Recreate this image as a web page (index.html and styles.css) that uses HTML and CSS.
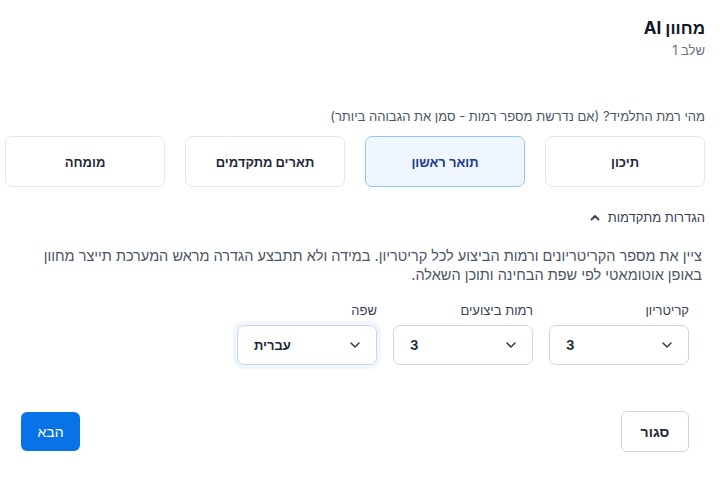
FILE: index.html
```html
<!DOCTYPE html>
<html lang="he" dir="rtl">
<head>
<meta charset="utf-8">
<link rel="stylesheet" href="styles.css">
</head>
<body>
<div class="dialog">
  <header class="head">
    <h1 class="title">מחוון AI</h1>
    <div class="step">שלב 1</div>
  </header>

  <section class="level">
    <p class="question">מהי רמת התלמיד? (אם נדרשת מספר רמות - סמן את הגבוהה ביותר)</p>
    <div class="cards">
      <button class="card">תיכון</button>
      <button class="card selected">תואר ראשון</button>
      <button class="card">תארים מתקדמים</button>
      <button class="card">מומחה</button>
    </div>
  </section>

  <section class="advanced">
    <div class="toggle">
      <span>הגדרות מתקדמות</span>
      <svg class="chev-up" width="10" height="7" viewBox="0 0 10 7"><path d="M1.5 5.5 L5 2 L8.5 5.5" fill="none" stroke="#374151" stroke-width="1.8" stroke-linecap="round" stroke-linejoin="round"/></svg>
    </div>
    <p class="desc">ציין את מספר הקריטריונים ורמות הביצוע לכל קריטריון. במידה ולא תתבצע הגדרה מראש המערכת תייצר מחוון באופן אוטומאטי לפי שפת הבחינה ותוכן השאלה.</p>
    <div class="fields">
      <div class="field">
        <label class="label">קריטריון</label>
        <div class="select"><span class="value">3</span><svg class="chev" width="12" height="8" viewBox="0 0 12 8"><path d="M2 2 L6 6 L10 2" fill="none" stroke="#374151" stroke-width="1.6" stroke-linecap="round" stroke-linejoin="round"/></svg></div>
      </div>
      <div class="field">
        <label class="label">רמות ביצועים</label>
        <div class="select"><span class="value">3</span><svg class="chev" width="12" height="8" viewBox="0 0 12 8"><path d="M2 2 L6 6 L10 2" fill="none" stroke="#374151" stroke-width="1.6" stroke-linecap="round" stroke-linejoin="round"/></svg></div>
      </div>
      <div class="field">
        <label class="label">שפה</label>
        <div class="select focused"><span class="value">עברית</span><svg class="chev" width="12" height="8" viewBox="0 0 12 8"><path d="M2 2 L6 6 L10 2" fill="none" stroke="#374151" stroke-width="1.6" stroke-linecap="round" stroke-linejoin="round"/></svg></div>
      </div>
    </div>
  </section>

  <footer class="foot">
    <button class="btn btn-close">סגור</button>
    <button class="btn btn-next">הבא</button>
  </footer>
</div>
</body>
</html>
```

FILE: styles.css
```css
* { box-sizing: border-box; }
html, body { margin: 0; padding: 0; background: #ffffff; }
body {
  font-family: Inter, "Liberation Sans", "DejaVu Sans", sans-serif;
  color: #1f2937;
  width: 720px;
  height: 479px;
  overflow: hidden;
}
.dialog { padding: 16px 15px 0 5px; }
.head { margin: 0; }
.title {
  margin: 0;
  font-size: 17px;
  line-height: 24px;
  font-weight: 700;
  color: #111827;
}
.step {
  font-size: 13px;
  line-height: 20px;
  color: #6b7280;
}
.level { margin-top: 46px; }
.question {
  margin: 0 0 10px 0;
  font-size: 13px;
  line-height: 20px;
  color: #4b5563;
}
.cards {
  display: grid;
  grid-template-columns: repeat(4, 160px);
  gap: 20px;
}
.card {
  height: 51px;
  border: 1px solid #e5e7eb;
  border-radius: 7px;
  background: #ffffff;
  font-family: inherit;
  font-size: 13px;
  font-weight: 700;
  color: #1f2937;
  padding: 0;
}
.card.selected {
  border-color: #93c5fd;
  background: #eff6ff;
  color: #1e3a8a;
}
.advanced { margin-top: 20px; }
.toggle {
  display: flex;
  align-items: center;
  gap: 8px;
  font-size: 13px;
  line-height: 20px;
  color: #374151;
}
.chev-up { display: block; }
.desc {
  margin: 19px 3px 0 0;
  font-size: 14.5px;
  line-height: 19px;
  color: #4b5563;
  padding-left: 6px;
}
.fields {
  display: flex;
  gap: 16px;
  margin-top: 16px;
  padding-right: 16px;
}
.field { width: 140px; display: flex; flex-direction: column; }
.label {
  font-size: 13px;
  line-height: 20px;
  color: #374151;
  margin-bottom: 5px;
}
.select {
  height: 40px;
  border: 1px solid #d1d5db;
  border-radius: 7px;
  display: flex;
  direction: ltr;
  align-items: center;
  justify-content: space-between;
  padding: 0 15px 0 16px;
  background: #fff;
}
.select.focused { box-shadow: 0 0 0 4px #eef6ff; }
.value {
  font-size: 13px;
  font-weight: 700;
  color: #1f2937;
}
.chev { display: block; }
.foot {
  display: flex;
  justify-content: space-between;
  align-items: center;
  margin-top: 46px;
  padding: 0 16px 0 16px;
}
.btn {
  font-family: inherit;
  font-size: 14px;
  border-radius: 6px;
  padding: 0;
}
.btn-close {
  width: 68px;
  height: 41px;
  border: 1px solid #d1d5db;
  background: #fff;
  font-weight: 700;
  color: #1f2937;
}
.btn-next {
  width: 59px;
  height: 39px;
  border: none;
  background: #0873e6;
  color: #ffffff;
}
```
